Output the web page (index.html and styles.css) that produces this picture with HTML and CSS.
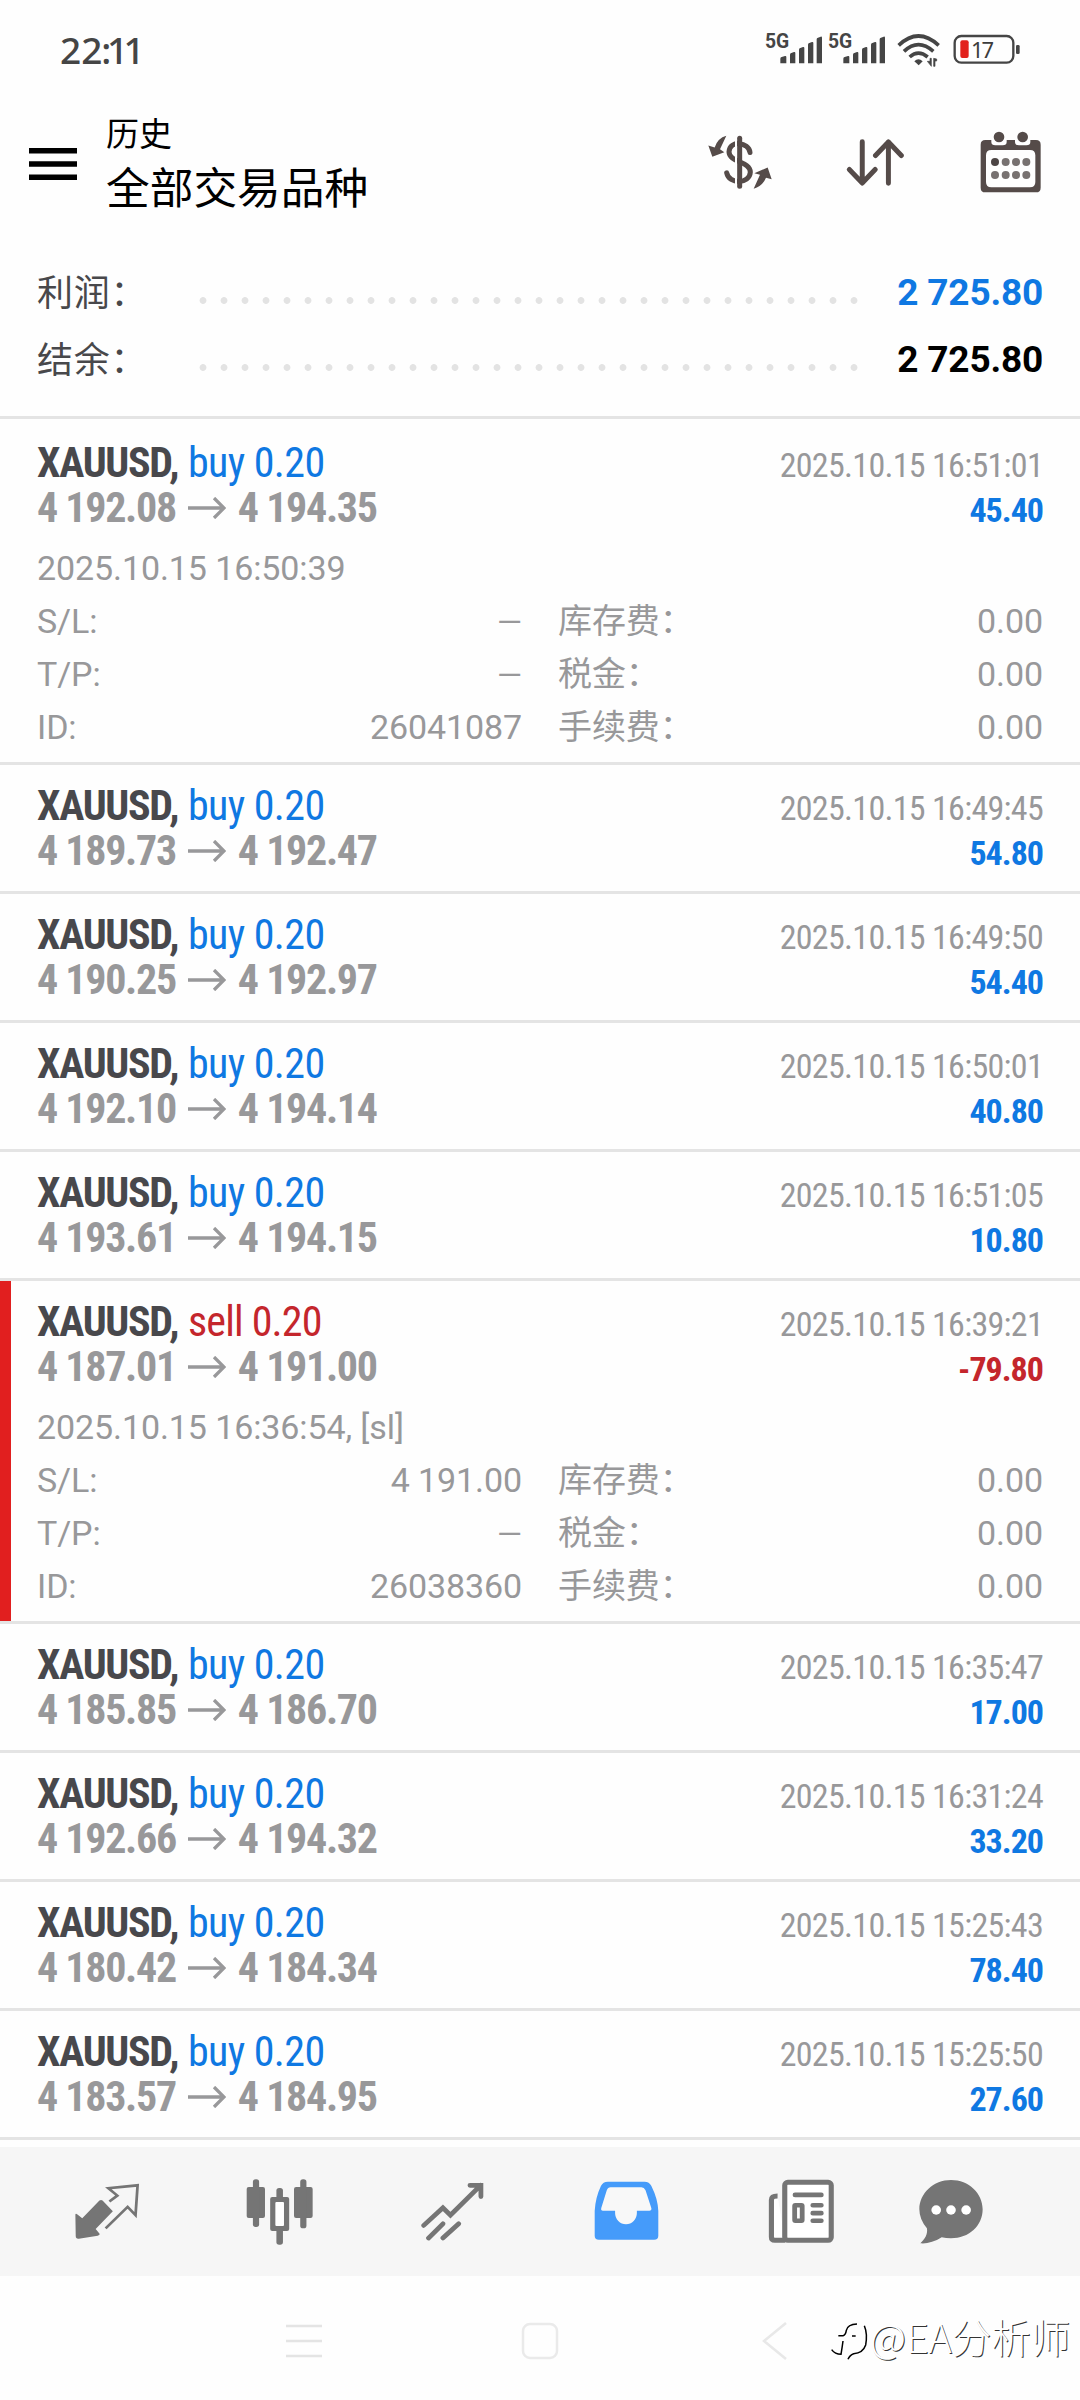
FILE: index.html
```html
<!DOCTYPE html>
<html lang="zh-CN">
<head>
<meta charset="utf-8">
<title>历史</title>
<link rel="stylesheet" href="styles.css">
</head>
<body>
<main class="screen">
  <header class="status">
    <span class="clock">22<span class="minutes">:11</span></span>
    <svg class="status-icons" viewBox="256 78 768 126" width="256" height="42">
      <g fill="#454545">
        <text class="net" x="256" y="143">5G</text>
        <text class="net" x="445" y="143">5G</text>
        <g id="bars">
          <path d="M302 176q0-4 4-5l10-3q4-1 4 3v19h-18zM331 164q0-4 4-5l8-3q4-1 4 3v31h-16zM358 149q0-4 4-5l8-3q4-1 4 3v46h-16zM385 134q0-4 4-5l8-3q4-1 4 3v61h-16zM411 118q0-4 4-5l8-3q4-1 4 3v77h-16z"/>
        </g>
        <use href="#bars" x="189"/>
        <path d="M704 184q12-12 25 0l-12 12z"/>
        <path d="M743 184h8v-9h4v24zM771 177v6h-5v16h-4v-24z" stroke="#454545" stroke-width="2"/>
      </g>
      <g fill="none" stroke="#454545" stroke-width="11">
        <path d="M657 136Q716 80 777 136"/>
        <path d="M673 154Q716 114 761 154"/>
        <path d="M690 171Q716 148 744 171"/>
        <rect x="825" y="108" width="176" height="80" rx="20" stroke-width="7"/>
      </g>
      <rect x="842" y="121" width="25" height="53" rx="6" fill="#e2211c"/>
      <rect x="1009" y="135" width="11" height="27" rx="4" fill="#454545"/>
      <text class="charge" x="874" y="173">17</text>
    </svg>
  </header>

  <section class="appbar">
    <svg class="menu" viewBox="0 0 48 32" width="48" height="32"><path d="M0 0h48v5.500H0zM0 13.300h48v5.500H0zM0 26.500h48v5.500H0z"/></svg>
    <div class="titles">
      <div class="subtitle">历史</div>
      <div class="title">全部交易品种</div>
    </div>
    <div class="actions">
      <svg viewBox="80 406 198 170" width="66" height="57">
        <g fill="none" stroke="#554b49" stroke-width="15" stroke-linecap="round" stroke-linejoin="round">
          <path d="M178 418V562"/>
          <path d="M209 461C206 430 148 422 146 459C147 492 209 486 210 520C208 556 146 558 139 522"/>
        </g>
        <path d="M167 414V566" stroke="#fff" stroke-width="6"/>
        <path fill="#554b49" d="M138 411L119 451L132 460L96 474L84 440L103 446Q112 418 138 411zM220 570L239 528L222 523L262 506L274 541L257 537Q247 562 220 570z"/>
      </svg>
      <svg viewBox="498 416 178 148" width="59" height="49">
        <path d="M547 427V552M508 511L547 552L586 511M626 553V428M587 469L626 428L665 469" fill="none" stroke="#554b49" stroke-width="15" stroke-linecap="round" stroke-linejoin="round"/>
      </svg>
      <svg viewBox="898 393 186 186" width="62" height="62">
        <path fill="#554b49" fill-rule="evenodd" d="M914 420H1066q14 0 14 14V563q0 14-14 14H914q-14 0-14-14V434q0-14 14-14zM932 450q-16 0-16 16V546q0 16 16 16H1048q16 0 16-16V466q0-16-16-16z"/>
        <path d="M932 418h46v8q0 10-12 10h-22q-12 0-12-10zM1003 418h46v8q0 10-12 10h-22q-12 0-12-10z" fill="#fff"/>
        <circle cx="955" cy="411" r="16" fill="#554b49"/><circle cx="1026" cy="411" r="16" fill="#554b49"/>
        <g fill="#777170"><circle cx="943" cy="486" r="12" fill="#4c4544"/><circle cx="975" cy="486" r="12"/><circle cx="1006" cy="486" r="12"/><circle cx="1037" cy="486" r="12"/><circle cx="943" cy="525" r="12"/><circle cx="975" cy="525" r="12"/><circle cx="1006" cy="525" r="12"/><circle cx="1037" cy="525" r="12"/></g>
      </svg>
    </div>
  </section>

  <section class="summary">
    <div class="sum"><span class="label">利润：</span><i class="dots"></i><b class="blue">2 725.80</b></div>
    <div class="sum"><span class="label">结余：</span><i class="dots"></i><b>2 725.80</b></div>
  </section>

  <section class="deals" id="deals"></section>

  <nav class="tabs">
    <span class="tab"><svg viewBox="216 248 192 172" width="66" height="57" preserveAspectRatio="none">
      <path d="M220 344q0-5 5-2l15 12L290 301q5-4 9 0L329 333L279 387L291 402q-1 4-6 5L230 416q-9 1-9-8z" fill="#757575"/>
      <path d="M319 304L342 286L316 264L401 255L395 345L372 320L308 385" fill="none" stroke="#757575" stroke-width="8"/>
    </svg></span>
    <span class="tab"><svg viewBox="716 234 194 198" width="67" height="66" preserveAspectRatio="none">
      <g fill="#757575"><rect x="718" y="258" width="53" height="93" rx="6"/><rect x="736" y="235" width="18" height="143" rx="8"/><rect x="855" y="258" width="54" height="93" rx="6"/><rect x="873" y="235" width="18" height="147" rx="8"/><rect x="786" y="288" width="55" height="102" rx="6"/><rect x="804" y="261" width="19" height="170" rx="8"/></g>
      <rect x="801" y="303" width="25" height="72" rx="3" fill="#fff"/>
    </svg></span>
    <span class="tab"><svg viewBox="1224 240 184 178" width="63" height="59" preserveAspectRatio="none">
      <path d="M1232 371L1288 318L1310 340L1398 250M1367 250H1399V284M1246 409L1288 366M1288 409L1334 366" fill="none" stroke="#757575" stroke-width="14" stroke-linecap="round"/>
    </svg></span>
    <span class="tab tab-history"><svg viewBox="160 240 188 180" width="65" height="60" preserveAspectRatio="none">
      <path fill-rule="evenodd" fill="#459bfa" d="M200 242H306q14 0 20 13Q345 295 346 330V404q0 12-12 12H174q-12 0-12-12V330Q164 290 180 255q6-13 20-13z"/>
      <path fill="#f8f8f8" d="M208 259H297q8 0 12 9L326 322q1 7-6 7H284V336a31 33 0 0 1-63 0V329H186q-7 0-5-8L197 268q3-9 11-9z"/>
    </svg></span>
    <span class="tab tab-news"><svg viewBox="662 232 196 196" width="67" height="65" preserveAspectRatio="none">
      <g fill="none" stroke="#757575" stroke-width="15"><path d="M712 417H682q-10 0-10-10V295q0-12 18-12" fill="#fff"/><rect x="711" y="242" width="136" height="175" rx="9" fill="#fff"/>
      <path d="M741 280H818M793 311H818M793 335H818M793 358H818" stroke-linecap="round" stroke-width="14"/><rect x="740" y="311" width="22" height="47" stroke-width="14" rx="2"/></g>
    </svg></span>
    <span class="tab tab-last"><svg viewBox="1100 234 186 192" width="64" height="64" preserveAspectRatio="none">
      <path fill="#757575" d="M1193 234C1245 234 1285 274 1285 322C1285 372 1245 409 1193 409Q1178 409 1166 406C1145 420 1122 426 1104 424C1118 410 1126 396 1123 379Q1101 352 1101 322C1101 274 1142 234 1193 234z"/>
      <g fill="#fff"><circle cx="1150" cy="324" r="14"/><circle cx="1193" cy="324" r="14"/><circle cx="1237" cy="324" r="14"/></g>
    </svg></span>
  </nav>

  <footer class="system">
    <svg viewBox="0 0 36 34" width="36" height="34"><path d="M0 2H36M0 17H36M0 32H36" stroke="#e4e4e4" stroke-width="2.500"/></svg>
    <svg viewBox="0 0 38 38" width="38" height="38"><rect x="2" y="2" width="34" height="34" rx="7" fill="none" stroke="#eaeaea" stroke-width="2.500"/></svg>
    <svg viewBox="0 0 26 40" width="26" height="40"><path d="M24 2L2 20L24 38" fill="none" stroke="#e8e8e8" stroke-width="2.500"/></svg>
    <div class="mark">
      <svg viewBox="30 74 114 120" width="38" height="40"><path d="M52 118H66Q74 116 76 102Q80 84 108 83M93 119H104M32 160Q42 174 60 174Q64 150 66 134M130 88Q140 112 134 146Q126 170 98 172Q86 176 81 189" fill="none" stroke="#000" stroke-width="4.500"/></svg>
      <span>@EA分析师</span>
    </div>
  </footer>
</main>
<script src="deals.js"></script>
</body>
</html>
```
FILE: styles.css
```css
* { box-sizing: border-box; }
body { margin: 0; background: #fff; }
svg { display: block; flex: none; }
.screen { width: 1080px; height: 2400px; display: flex; flex-direction: column; overflow: hidden; background: #fefefe; font-family: Roboto, "Noto Sans CJK SC", sans-serif; }

.status { height: 100px; flex: none; display: flex; justify-content: space-between; align-items: flex-start; padding: 26px 59px 0 60px; }
.status-icons { overflow: visible; }
.clock { margin-top: 6px; font: 500 37px/36px "Noto Sans", sans-serif; color: #454545; }
.minutes { letter-spacing: -4.500px; margin-left: -1px; }
.net { font: 700 58px Roboto, sans-serif; }
.charge { font: 400 66px "Noto Sans", sans-serif; fill: #3c3c3c; letter-spacing: -6px; }

.appbar { height: 155px; flex: none; display: flex; align-items: flex-start; padding-left: 29px; }
.menu { margin-top: 48px; }
.titles { margin-left: 29px; color: #000; font-family: "Noto Sans CJK SC", sans-serif; }
.subtitle { font-size: 33px; line-height: 40px; margin-top: 12px; }
.title { font-size: 43.700px; line-height: 50px; margin-top: 8px; white-space: nowrap; }
.actions { margin: 31px 38px 0 auto; display: flex; align-items: center; gap: 74px; }
.actions svg:nth-child(2) { margin: 0 1px 0 -1px; }

.summary { height: 164px; flex: none; padding: 4px 37px 0; border-bottom: 3px solid #e4e4e4; }
.sum { height: 67px; display: flex; align-items: center; }
.sum .label { width: 161px; height: 65px; font: 36px/60px "Noto Sans CJK SC", sans-serif; letter-spacing: 0.800px; color: #48484b; }
.sum b { margin-left: auto; font-size: 37px; font-weight: 700; letter-spacing: -0.200px; color: #000; }
.sum .blue, .blue { color: #0f78e2; }
.dots { width: 672px; height: 7px; margin-top: 16px; background: radial-gradient(circle at 5px 3.500px, #e3e3e3 3px, transparent 3.800px) 0 0 / 21px 7px; }

.deals { height: 1728px; flex: none; color: #98989a; }
.deal { height: 129px; padding: 18px 37px 0; border-bottom: 3px solid #e4e4e4; }
.deal.open { height: 343px; }
.deal:first-child { height: 346px; padding-top: 21px; }
.deal.stopped { background: linear-gradient(#e11f1f, #e11f1f) 0 0 / 11px 100% no-repeat padding-box; }
.line { display: flex; justify-content: space-between; align-items: baseline; height: 45px; line-height: 45px; font-family: "Roboto Condensed", Roboto, sans-serif; font-stretch: 75%; font-size: 42px; white-space: nowrap; }
.symbol { font-weight: 700; color: #48484c; letter-spacing: -1.300px; }
.side { font-weight: 400; letter-spacing: -0.600px; }
.sell { color: #c4262c; letter-spacing: -0.800px; }
.prices { font-weight: 700; letter-spacing: -1.300px; display: flex; align-items: center; gap: 12px; }
.time { font-size: 34px; letter-spacing: -0.700px; }
.profit { font-size: 34px; font-weight: 700; letter-spacing: -1px; }
.detail { margin-top: 12px; font-size: 34px; line-height: 53px; font-weight: 400; letter-spacing: -0.100px; }
.grid { display: grid; grid-template-columns: 485px 1fr; column-gap: 36px; }
.cell { display: flex; justify-content: space-between; height: 53px; }
.none { font-size: 32px; }

.tabs { height: 129px; flex: none; background: #f6f6f6; display: flex; padding-left: 20px; }
.tab { width: 173px; display: flex; align-items: center; justify-content: center; }
.tab-history { padding: 0 0 1px 2px; }
.tab-news { padding-left: 5px; }
.tab-last { width: 131px; }

.system { flex: 1; display: flex; align-items: center; padding: 6px 0 0 286px; }
.system > svg:nth-child(2) { margin-left: 199px; }
.system > svg:nth-child(3) { margin-left: 203px; }
.mark { display: flex; align-items: center; margin-left: 43px; }
.mark span { margin: -10px 0 0 1px; font: 300 39.500px/44px "Noto Sans CJK SC", sans-serif; color: #fff; text-shadow: 1px 1px 0 #333; white-space: nowrap; }
```
FILE: deals.js
```js
const NONE = '<span class="none">—</span>';
const deals = [
  ["buy", "4 192.08", "4 194.35", "2025.10.15 16:51:01", "45.40", ["2025.10.15 16:50:39", NONE, "26041087"]],
  ["buy", "4 189.73", "4 192.47", "2025.10.15 16:49:45", "54.80"],
  ["buy", "4 190.25", "4 192.97", "2025.10.15 16:49:50", "54.40"],
  ["buy", "4 192.10", "4 194.14", "2025.10.15 16:50:01", "40.80"],
  ["buy", "4 193.61", "4 194.15", "2025.10.15 16:51:05", "10.80"],
  ["sell", "4 187.01", "4 191.00", "2025.10.15 16:39:21", "-79.80", ["2025.10.15 16:36:54, [sl]", "4 191.00", "26038360"]],
  ["buy", "4 185.85", "4 186.70", "2025.10.15 16:35:47", "17.00"],
  ["buy", "4 192.66", "4 194.32", "2025.10.15 16:31:24", "33.20"],
  ["buy", "4 180.42", "4 184.34", "2025.10.15 15:25:43", "78.40"],
  ["buy", "4 183.57", "4 184.95", "2025.10.15 15:25:50", "27.60"]
];
const cell = (k, v) => `<div class="cell"><span>${k}</span><span>${v}</span></div>`;
const arrow = `<svg viewBox="0 0 38 22" width="38" height="22"><path d="M0 11H36M26 1L36 11L26 21" fill="none" stroke="#98989a" stroke-width="3.3"/></svg>`;
document.getElementById("deals").innerHTML = deals.map(([side, from, to, time, profit, more]) => {
  const tone = side === "sell" ? "sell" : "blue";
  const detail = more ? `<div class="detail"><div>${more[0]}</div><div class="grid">${cell("S/L:", more[1])}${cell("库存费：", "0.00")}${cell("T/P:", NONE)}${cell("税金：", "0.00")}${cell("ID:", more[2])}${cell("手续费：", "0.00")}</div></div>` : "";
  return `<article class="deal${more ? " open" : ""}${side === "sell" ? " stopped" : ""}">
    <div class="line"><span class="head"><span class="symbol">XAUUSD,</span> <span class="side ${tone}">${side} 0.20</span></span><span class="time">${time}</span></div>
    <div class="line"><span class="prices"><span>${from}</span>${arrow}<span>${to}</span></span><span class="profit ${tone}">${profit}</span></div>${detail}
  </article>`;
}).join("");
```
